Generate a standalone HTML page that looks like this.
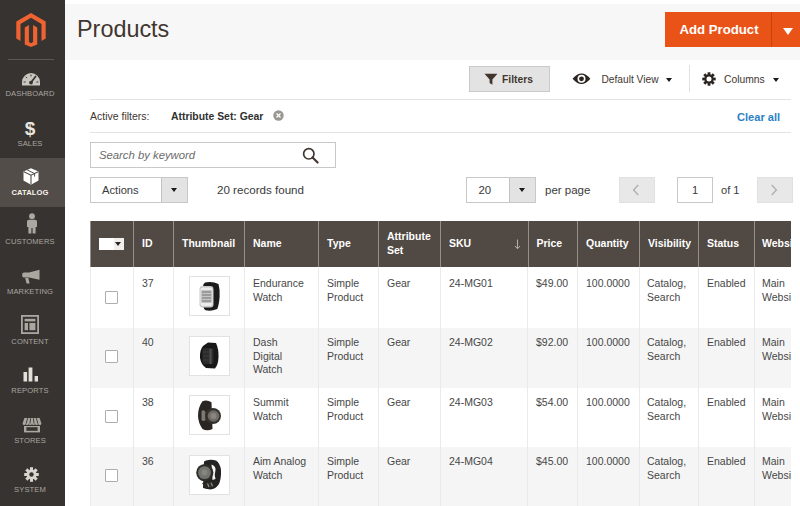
<!DOCTYPE html>
<html lang="en">
<head>
<meta charset="utf-8">
<title>Products</title>
<style>
*{box-sizing:border-box;margin:0;padding:0}
html,body{width:800px;height:506px;overflow:hidden;background:#fff}
body{font-family:"Liberation Sans",sans-serif;font-size:10.5px;color:#3a3a3a;position:relative}
.abs{position:absolute;white-space:nowrap}
#side{position:absolute;left:0;top:0;width:65px;height:506px;background:#373330}
#side .act{position:absolute;left:0;top:158px;width:65px;height:49px;background:#524d49}
#side .div{position:absolute;left:8px;top:59px;width:46px;height:1px;background:#5b5754}
.ml{position:absolute;left:-2.5px;width:65px;text-align:center;font-size:7.6px;color:#aaa6a0;letter-spacing:.1px;line-height:9px}
.ml.on{color:#f7f3eb;font-weight:bold}
.mi{position:absolute;left:0;width:65px;height:20px}
#hdr{position:absolute;left:65px;top:4px;width:735px;height:56px;background:#f7f7f7}
#title{left:77px;top:14px;font-size:23.4px;line-height:30px;color:#41362f}
#add{position:absolute;left:665px;top:12px;width:135px;height:35px;background:#ea5318}
#add .t{position:absolute;left:0;top:0;width:108px;line-height:35px;text-align:center;color:#fff;font-weight:bold;font-size:13.2px}
#add .s{position:absolute;left:106px;top:0;width:1px;height:35px;background:#c94600}
#add .a{position:absolute;left:117.5px;top:16px;width:0;height:0;border-left:5px solid transparent;border-right:5px solid transparent;border-top:7px solid #fff}
.hl{position:absolute;left:90px;width:701px;height:1px;background:#e3e3e3}
#filt{position:absolute;left:469px;top:65.5px;width:81px;height:26px;background:#e3e3e3;border:1px solid #c9c9c9}
.b{font-weight:bold}
.btn{position:absolute;height:26px;top:177px;background:#e8e8e8;border:1px solid #e0e0e0}
.inp{position:absolute;height:26px;top:177px;background:#fff;border:1px solid #c8c8c8}
.car{position:absolute;width:0;height:0;border-left:3px solid transparent;border-right:3px solid transparent;border-top:4px solid #1a1a1a}
#th{position:absolute;left:90px;top:221px;width:710px;height:46px;background:#514943}
#th .s{position:absolute;top:0;width:1px;height:46px;background:#958f8a}
#th .h{position:absolute;color:#fff;font-weight:bold;font-size:10.5px;line-height:13.5px;white-space:nowrap}
.row{position:absolute;left:90px;width:710px}
.row.alt{background:#f5f5f5}
.vs{position:absolute;top:267px;width:1px;height:239px;background:#eaeaea}
.c{position:absolute;line-height:13.5px;white-space:nowrap;color:#474747}
.cb{position:absolute;left:104.5px;width:13px;height:13px;border:1px solid #adadad;background:#fff;border-radius:1px}
.tb{position:absolute;left:189px;width:41px;height:40px;overflow:hidden;border:1px solid #e2e2e2;background:#fff}
</style>
</head>
<body>
<div id="hdr"></div>
<div id="side">
  <div class="div"></div>
  <div class="act"></div>

  <svg class="abs" style="left:16px;top:13px" width="30" height="34" viewBox="0 0 256 296"><g fill="#ef6231"><polygon points="128,0 0,74 0,222 36.5,243 36.5,95 128,42 219.5,95 219.5,243 256,222 256,74"/><polygon points="146,253 128,263.5 110,253 110,105 73.5,126 73.5,274 128,296 182.5,274 182.5,126 146,105"/></g></svg>
  <svg class="abs" style="left:21px;top:72px" width="20" height="14" viewBox="0 0 20 14"><path d="M1 13.4 V10 A9 9 0 0 1 19 10 V13.4 Z" fill="#c9c5bf"/><path d="M10 10.6 L14.6 4.4" stroke="#373330" stroke-width="1.7" stroke-linecap="round"/><circle cx="10" cy="10.6" r="1.9" fill="#373330"/><g stroke="#373330" stroke-width="1"><path d="M2.6 10h2M15.4 10h2M10 2.6v1.8M4.6 4.8l1.3 1.3"/></g></svg>
  <div class="abs" style="left:-2.5px;width:65px;top:118px;text-align:center;font-size:19px;line-height:22px;font-weight:bold;color:#e9e5df">$</div>
  <svg class="abs" style="left:23px;top:168px" width="16" height="17" viewBox="0 0 16 17"><path d="M8 0.3 L15.5 3.6 V12.6 L8 16.7 L0.5 12.6 V3.6 Z" fill="#fff"/><path d="M0.8 3.8 L8 7.2 L15.2 3.8 M8 7.2 V16.4" stroke="#524d49" stroke-width="1.1" fill="none"/><path d="M4.2 1.9 L11.6 5.6 V8.6" stroke="#524d49" stroke-width="1" fill="none"/></svg>
  <svg class="abs" style="left:26px;top:213px" width="12" height="21" viewBox="0 0 12 21"><circle cx="6" cy="3.2" r="2.9" fill="#aaa6a0"/><path d="M1 8.5 Q1 6.8 3 6.8 H9 Q11 6.8 11 8.5 V14 H9.6 V20.5 H6.6 V15 H5.4 V20.5 H2.4 V14 H1 Z" fill="#aaa6a0"/></svg>
  <svg class="abs" style="left:21px;top:269px" width="20" height="16" viewBox="0 0 20 16"><path d="M18.5 0.8 V10.8 L8 8.6 H3 Q1.2 8.6 1.2 6.8 V5.4 Q1.2 3.6 3 3.6 H8 Z" fill="#aaa6a0"/><path d="M4.2 9 H7.4 L8.6 14.6 H5.6 Z" fill="#aaa6a0"/></svg>
  <svg class="abs" style="left:21px;top:315px" width="18" height="19" viewBox="0 0 18 19"><rect x="0.9" y="0.9" width="16.2" height="17.2" fill="none" stroke="#aaa6a0" stroke-width="1.8"/><rect x="3.6" y="3.8" width="10.8" height="2.6" fill="#aaa6a0"/><rect x="3.6" y="8" width="3.4" height="7.2" fill="#aaa6a0"/><rect x="8.4" y="8" width="6" height="7.2" fill="#aaa6a0"/></svg>
  <svg class="abs" style="left:23px;top:367px" width="16" height="15" viewBox="0 0 16 15"><rect x="0.5" y="5" width="3.6" height="9.5" fill="#e3dfd9"/><rect x="5.6" y="0.5" width="3.8" height="14" fill="#e3dfd9"/><rect x="11.6" y="9" width="3.4" height="5.5" fill="#e3dfd9"/></svg>
  <svg class="abs" style="left:22px;top:417px" width="20" height="16" viewBox="0 0 20 16"><path d="M2.4 1 H17.6 L19.4 6.4 Q19.4 8 17.8 8 Q16.2 8 16.2 6.4 Q16.2 8 14.6 8 Q13 8 13 6.4 Q13 8 11.4 8 Q10 8 10 6.4 Q10 8 8.4 8 Q6.8 8 6.8 6.4 Q6.8 8 5.2 8 Q3.6 8 3.6 6.4 Q3.6 8 2.2 8 Q0.6 8 0.6 6.4 Z" fill="#aaa6a0"/><g stroke="#373330" stroke-width="0.9"><path d="M5.6 1.2 L4.2 6.6 M8.6 1.2 L8 6.6 M11.4 1.2 L12 6.6 M14.4 1.2 L15.8 6.6"/></g><path d="M2 9 H18 V15.4 H2 Z" fill="#aaa6a0"/><rect x="4.4" y="10.2" width="11.2" height="3.6" fill="#373330"/></svg>
  <svg class="abs" style="left:24px;top:467px" width="15" height="15" viewBox="-7.5 -7.5 15 15"><g fill="#d8d4ce"><circle r="5"/><g id="t"><rect x="-1.5" y="-7.3" width="3" height="14.6"/></g><use href="#t" transform="rotate(45)"/><use href="#t" transform="rotate(90)"/><use href="#t" transform="rotate(135)"/></g><circle r="2.2" fill="#373330"/></svg>
  <div class="ml" style="top:89px">DASHBOARD</div>
  <div class="ml" style="top:139px">SALES</div>
  <div class="ml on" style="top:188px">CATALOG</div>
  <div class="ml" style="top:237px">CUSTOMERS</div>
  <div class="ml" style="top:287px">MARKETING</div>
  <div class="ml" style="top:337px">CONTENT</div>
  <div class="ml" style="top:386px">REPORTS</div>
  <div class="ml" style="top:436px">STORES</div>
  <div class="ml" style="top:485px">SYSTEM</div>
</div>
<div id="title" class="abs">Products</div>
<div id="add"><div class="t">Add Product</div><div class="s"></div><div class="a"></div></div>

<div id="filt"></div>
<div class="abs b" style="left:502px;top:73px;font-size:10.3px;line-height:14px;color:#41362f">Filters</div>
<div class="abs" style="left:601.5px;top:73px;font-size:10.2px;line-height:14px;color:#41362f">Default View</div>
<div class="car" style="left:666px;top:78px"></div>
<div style="position:absolute;left:689px;top:65px;width:1px;height:27px;background:#e0e0e0"></div>
<div class="abs" style="left:724px;top:73px;font-size:10.3px;line-height:14px;color:#41362f">Columns</div>
<div class="car" style="left:773px;top:78px"></div>

<div class="hl" style="top:99px"></div>
<div class="abs" style="left:90px;top:108.5px;font-size:10.5px;line-height:14px;color:#41362f">Active filters:</div>
<div class="abs" style="left:171px;top:109.5px;font-size:10.4px;line-height:14px;color:#303030;font-weight:bold">Attribute Set: Gear</div>
<div class="abs b" style="left:737px;top:110px;font-size:11.1px;line-height:14px;color:#2a82c7">Clear all</div>
<div class="hl" style="top:132px"></div>

<div class="inp" style="left:90px;top:142px;width:246px;height:25.5px"></div>
<div class="abs" style="left:99px;top:147.5px;font-size:11.3px;line-height:14px;color:#6b6b6b;font-style:italic">Search by keyword</div>

<div class="inp" style="left:90px;width:98px"></div>
<div style="position:absolute;left:161px;top:178px;width:26px;height:24px;background:#e3e3e3;border-left:1px solid #c2c2c2"></div>
<div class="car" style="left:171px;top:188px"></div>
<div class="abs" style="left:102px;top:182.5px;font-size:11.2px;line-height:14px">Actions</div>
<div class="abs" style="left:217px;top:182.5px;font-size:11.6px;line-height:14px">20 records found</div>

<div class="inp" style="left:466px;width:70px"></div>
<div style="position:absolute;left:509px;top:178px;width:26px;height:24px;background:#e3e3e3;border-left:1px solid #c2c2c2"></div>
<div class="car" style="left:519px;top:188px"></div>
<div class="abs" style="left:478.5px;top:182.5px;font-size:11.4px;line-height:14px">20</div>
<div class="abs" style="left:545px;top:182.5px;font-size:11.5px;line-height:14px">per page</div>
<div class="btn" style="left:619px;width:36px"></div>
<div class="inp" style="left:677px;width:36px"></div>
<div class="abs" style="left:677px;width:36px;text-align:center;top:182.5px;font-size:11.2px;line-height:14px">1</div>
<div class="abs" style="left:721px;top:182.5px;font-size:11.1px;line-height:14px">of 1</div>
<div class="btn" style="left:757px;width:36px"></div>


<svg class="abs" style="left:483.5px;top:72.5px" width="14" height="12.5" viewBox="0 0 16 14"><path d="M0.6 0.8 H15.4 L9.6 7.2 V13.4 L6.4 11.2 V7.2 Z" fill="#41362f"/></svg>
<svg class="abs" style="left:572px;top:72px" width="19" height="14" viewBox="0 0 19 14"><path d="M0.6 6.8 Q9.5 -3.6 18.4 6.8 Q9.5 17.2 0.6 6.8 Z" fill="#2b2420"/><circle cx="9.5" cy="6.8" r="4" fill="#fff"/><circle cx="9.5" cy="6.8" r="2.4" fill="#2b2420"/></svg>
<svg class="abs" style="left:702px;top:72.3px" width="14" height="14" viewBox="-7.5 -7.5 15 15"><g fill="#2b2420"><circle r="5"/><g id="t2"><rect x="-1.5" y="-7.2" width="3" height="14.4"/></g><use href="#t2" transform="rotate(45)"/><use href="#t2" transform="rotate(90)"/><use href="#t2" transform="rotate(135)"/></g><circle r="2.7" fill="#fff"/></svg>
<svg class="abs" style="left:273px;top:110px" width="11" height="11" viewBox="0 0 11 11"><circle cx="5.5" cy="5.5" r="5.2" fill="#9a9692"/><path d="M3.5 3.5 L7.5 7.5 M7.5 3.5 L3.5 7.5" stroke="#fff" stroke-width="1.3"/></svg>
<svg class="abs" style="left:302px;top:147px" width="17" height="17" viewBox="0 0 17 17"><circle cx="6.8" cy="6.8" r="5.2" fill="none" stroke="#41362f" stroke-width="1.7"/><path d="M10.6 10.6 L15.6 15.6" stroke="#41362f" stroke-width="2.1" stroke-linecap="round"/></svg>
<svg class="abs" style="left:632px;top:184px" width="8" height="12" viewBox="0 0 8 12"><path d="M6.2 1 L1.6 6 L6.2 11" fill="none" stroke="#adadad" stroke-width="1.3"/></svg>
<svg class="abs" style="left:770px;top:184px" width="8" height="12" viewBox="0 0 8 12"><path d="M1.8 1 L6.4 6 L1.8 11" fill="none" stroke="#adadad" stroke-width="1.3"/></svg>
<div class="row" style="top:267px;height:61px"></div>
<div class="row alt" style="top:328px;height:60px"></div>
<div class="row" style="top:388px;height:59px"></div>
<div class="row alt" style="top:447px;height:59px"></div>
<div class="vs" style="left:90px"></div>
<div class="vs" style="left:133px"></div>
<div class="vs" style="left:173px"></div>
<div class="vs" style="left:244px"></div>
<div class="vs" style="left:318px"></div>
<div class="vs" style="left:378px"></div>
<div class="vs" style="left:440px"></div>
<div class="vs" style="left:527px"></div>
<div class="vs" style="left:577px"></div>
<div class="vs" style="left:639px"></div>
<div class="vs" style="left:698px"></div>
<div class="vs" style="left:754px"></div>
<div class="cb" style="top:291px"></div>
<div class="tb" style="top:276px"><svg class="w w0" width="39" height="39" viewBox="0 0 39 39"><path d="M15 5.5 Q22 3.8 28.5 7 Q30.2 13 29.6 20 Q29 28 27.2 32 Q21 34.6 15.5 33.2 Q13.5 32 13.5 30 L20 28 L20 10 L13 9.5 Q13 7 15 5.5 Z" fill="#1c1c1c"/><rect x="9.5" y="9" width="14" height="21.5" rx="3.2" fill="#c9c9c9"/><rect x="10.5" y="10.5" width="12" height="18.5" rx="2.2" fill="#ececec"/><rect x="11.5" y="13.5" width="10" height="12" fill="#9b9b9b"/><path d="M11.5 16.5h10M11.5 19.5h10M11.5 22.5h10" stroke="#c6c6c6" stroke-width="1"/></svg></div>
<div class="c" style="left:142px;top:277px">37</div>
<div class="c" style="left:253px;top:277px">Endurance<br>Watch</div>
<div class="c" style="left:327px;top:277px">Simple<br>Product</div>
<div class="c" style="left:387px;top:277px">Gear</div>
<div class="c" style="left:449px;top:277px">24-MG01</div>
<div class="c" style="left:536px;top:277px">$49.00</div>
<div class="c" style="left:586px;top:277px">100.0000</div>
<div class="c" style="left:647px;top:277px">Catalog,<br>Search</div>
<div class="c" style="left:707px;top:277px">Enabled</div>
<div class="c" style="left:762px;top:277px">Main<br>Website</div>
<div class="cb" style="top:350px"></div>
<div class="tb" style="top:336px"><svg class="w w1" width="39" height="39" viewBox="0 0 39 39"><path d="M18 5.5 L26 6 Q28.8 12 28.5 20 Q28.2 28 25 31.5 L16 31 Q11 27.5 10 21 Q9.5 13 13 9 Z" fill="#181818"/><rect x="12.5" y="11" width="11" height="16" rx="2" fill="#2c2c2c"/><path d="M20.5 12 V27" stroke="#4e4e4a" stroke-width="2.2"/><path d="M13 15h6M13 19h6M13 23h6" stroke="#3c3c3c" stroke-width="1"/></svg></div>
<div class="c" style="left:142px;top:336px">40</div>
<div class="c" style="left:253px;top:336px">Dash<br>Digital<br>Watch</div>
<div class="c" style="left:327px;top:336px">Simple<br>Product</div>
<div class="c" style="left:387px;top:336px">Gear</div>
<div class="c" style="left:449px;top:336px">24-MG02</div>
<div class="c" style="left:536px;top:336px">$92.00</div>
<div class="c" style="left:586px;top:336px">100.0000</div>
<div class="c" style="left:647px;top:336px">Catalog,<br>Search</div>
<div class="c" style="left:707px;top:336px">Enabled</div>
<div class="c" style="left:762px;top:336px">Main<br>Website</div>
<div class="cb" style="top:410px"></div>
<div class="tb" style="top:395px"><svg class="w w2" width="39" height="39" viewBox="0 0 39 39"><path d="M12.5 5.2 Q17 3.6 21.5 6.2 L22.5 33 Q17 35.6 12.5 33 Q8.3 27 8 20 Q8 11 12.5 5.2 Z" fill="#292522"/><path d="M11.5 15 Q14 13 15.5 16 L15.5 24 Q13.5 26 11.5 24 Z" fill="#7d7872"/><circle cx="23" cy="20" r="8" fill="#34302d"/><circle cx="23.5" cy="20" r="5.8" fill="#6f6a65"/><circle cx="23.5" cy="20" r="3" fill="#8a857f"/></svg></div>
<div class="c" style="left:142px;top:396px">38</div>
<div class="c" style="left:253px;top:396px">Summit<br>Watch</div>
<div class="c" style="left:327px;top:396px">Simple<br>Product</div>
<div class="c" style="left:387px;top:396px">Gear</div>
<div class="c" style="left:449px;top:396px">24-MG03</div>
<div class="c" style="left:536px;top:396px">$54.00</div>
<div class="c" style="left:586px;top:396px">100.0000</div>
<div class="c" style="left:647px;top:396px">Catalog,<br>Search</div>
<div class="c" style="left:707px;top:396px">Enabled</div>
<div class="c" style="left:762px;top:396px">Main<br>Website</div>
<div class="cb" style="top:469px"></div>
<div class="tb" style="top:455px"><svg class="w w3" width="39" height="39" viewBox="0 0 39 39"><path d="M16 4.5 Q21 3 26 4.5 Q30 7 31 14 Q31.4 22 29 28 Q26 33 20 33.5 L13 32 L14 5.5 Z" fill="#242321"/><path d="M21.5 8.5 Q26 10 25.5 14 Q24 19 25.5 23 L22.5 24 Z" fill="#f4f4f4"/><circle cx="14.8" cy="16.6" r="8.6" fill="#2d2c2a"/><circle cx="14.5" cy="16.6" r="6.4" fill="#73736d"/><circle cx="14.5" cy="16.6" r="3" fill="#85857f"/><path d="M12 27 L22 25 L25 31 L16 33 Z" fill="#2a2927"/><path d="M17.5 27.5 L19 31 M21 26.8 L22.5 30.2" stroke="#8d8d88" stroke-width="1.2"/></svg></div>
<div class="c" style="left:142px;top:455px">36</div>
<div class="c" style="left:253px;top:455px">Aim Analog<br>Watch</div>
<div class="c" style="left:327px;top:455px">Simple<br>Product</div>
<div class="c" style="left:387px;top:455px">Gear</div>
<div class="c" style="left:449px;top:455px">24-MG04</div>
<div class="c" style="left:536px;top:455px">$45.00</div>
<div class="c" style="left:586px;top:455px">100.0000</div>
<div class="c" style="left:647px;top:455px">Catalog,<br>Search</div>
<div class="c" style="left:707px;top:455px">Enabled</div>
<div class="c" style="left:762px;top:455px">Main<br>Website</div>
<div id="th">
  <div class="s" style="left:0"></div>
  <div class="s" style="left:43px"></div>
  <div class="s" style="left:83px"></div>
  <div class="s" style="left:154px"></div>
  <div class="s" style="left:228px"></div>
  <div class="s" style="left:288px"></div>
  <div class="s" style="left:350px"></div>
  <div class="s" style="left:438px"></div>
  <div class="s" style="left:487px"></div>
  <div class="s" style="left:549px"></div>
  <div class="s" style="left:608px"></div>
  <div class="s" style="left:664px"></div>
  <div style="position:absolute;left:9px;top:16.5px;width:15px;height:12.5px;background:#fff"></div>
  <div style="position:absolute;left:24px;top:16.5px;width:10px;height:12.5px;background:#f1efed"></div>
  <div class="car" style="left:25px;top:21px;border-top-color:#2b2420"></div>
  <svg style="position:absolute;left:424px;top:17.5px" width="7" height="11" viewBox="0 0 7 11"><path d="M3.5 0.5 V9.5 M1 7 L3.5 9.8 L6 7" fill="none" stroke="#b5b0ac" stroke-width="1"/></svg>
  <div class="h" style="left:52px;top:16px">ID</div>
  <div class="h" style="left:92px;top:16px">Thumbnail</div>
  <div class="h" style="left:163px;top:16px">Name</div>
  <div class="h" style="left:237px;top:16px">Type</div>
  <div class="h" style="left:297px;top:9px">Attribute<br>Set</div>
  <div class="h" style="left:359px;top:16px">SKU</div>
  <div class="h" style="left:446.5px;top:16px">Price</div>
  <div class="h" style="left:496px;top:16px">Quantity</div>
  <div class="h" style="left:558px;top:16px">Visibility</div>
  <div class="h" style="left:617px;top:16px">Status</div>
  <div class="h" style="left:672px;top:16px">Websites</div>
</div>
<div style="position:absolute;left:791px;top:210px;width:9px;height:296px;background:#fff"></div>
</body>
</html>
